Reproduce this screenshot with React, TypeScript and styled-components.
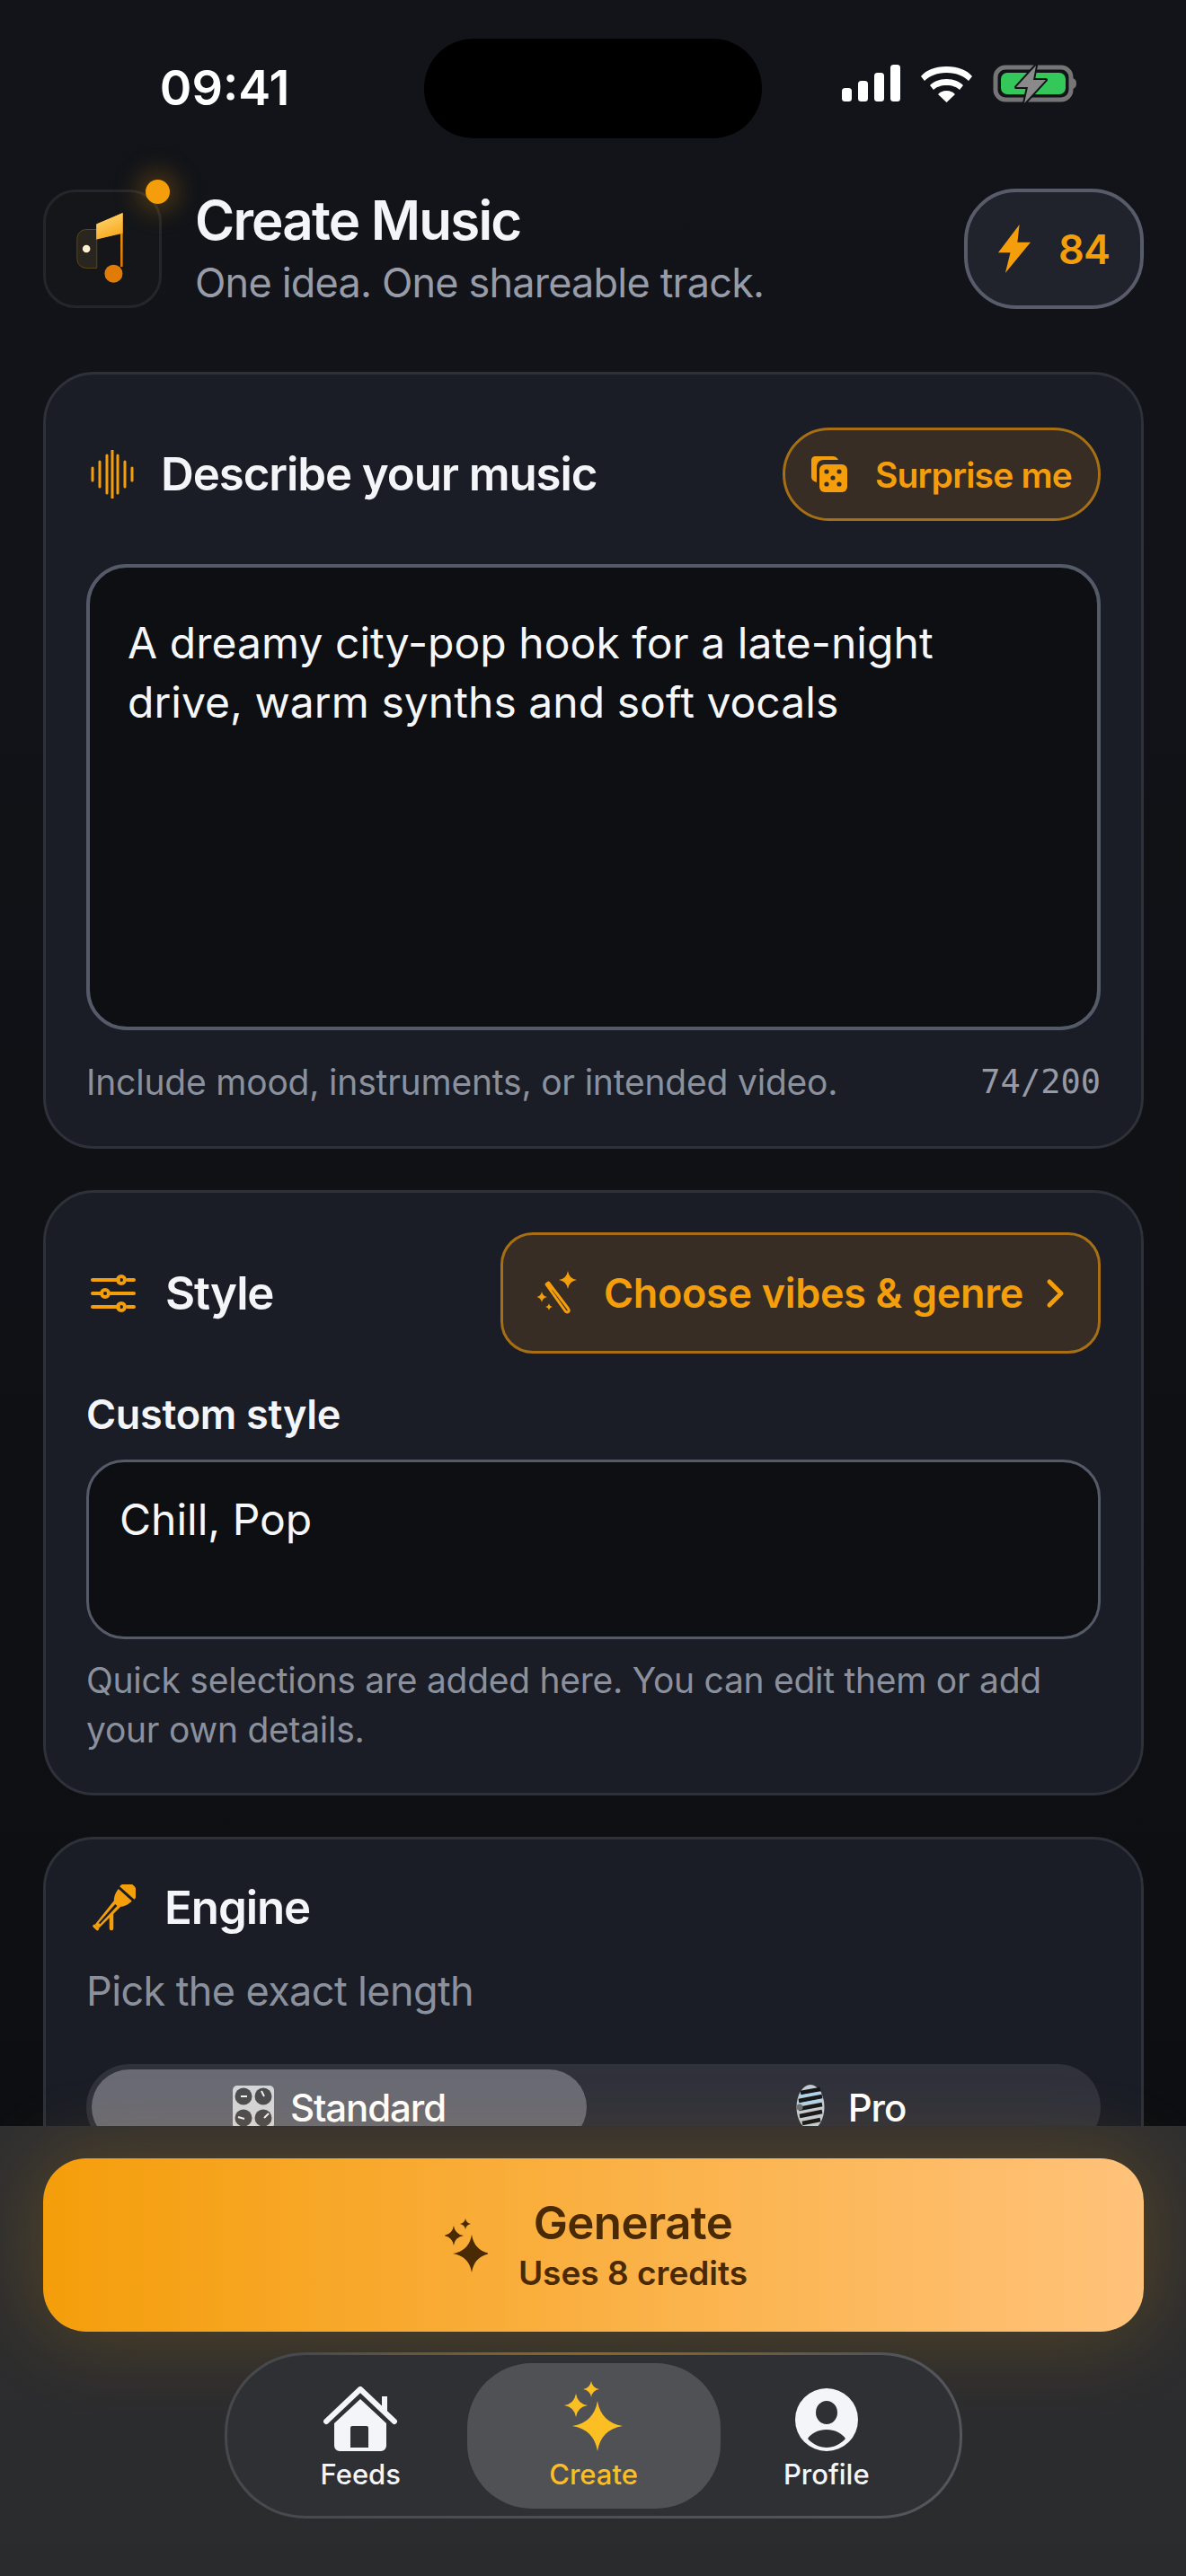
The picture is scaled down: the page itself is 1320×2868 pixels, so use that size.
import React from "react";
import styled, { createGlobalStyle } from "styled-components";

const ORANGE = "#f59e0b";

const star = (cx: number, cy: number, r: number, k = 0.14) => {
  const c = r * k;
  return `M${cx} ${cy - r}Q${cx + c} ${cy - c} ${cx + r} ${cy}Q${cx + c} ${cy + c} ${cx} ${cy + r}Q${cx - c} ${cy + c} ${cx - r} ${cy}Q${cx - c} ${cy - c} ${cx} ${cy - r}Z`;
};

const App = () => {
  return (
    <Page>
      <GlobalStyle />
      <StatusBar>
        <Time>09:41</Time>
        <Island />
        <StatusIcons />
      </StatusBar>

      <Header>
        <LogoBox>
          <LogoIcon />
          <LogoDot />
        </LogoBox>
        <HeaderText>
          <AppTitle>Create Music</AppTitle>
          <AppSubtitle>One idea. One shareable track.</AppSubtitle>
        </HeaderText>
        <CreditPill>
          <svg width="36" height="54" viewBox="2 0 32 52" preserveAspectRatio="none">
            <path d="M23 0 2 30h12L9 52l25-33H21z" fill={ORANGE} />
          </svg>
          <span>84</span>
        </CreditPill>
      </Header>

      <Cards>
        <Card $top={59} $bottom={43}>
          <CardHead>
            <TitleGroup $gap={30}>
              <WaveIcon />
              <CardTitle>Describe your music</CardTitle>
            </TitleGroup>
            <SurpriseBtn>
              <DiceIcon />
              Surprise me
            </SurpriseBtn>
          </CardHead>
          <PromptBox>
            A dreamy city-pop hook for a late-night drive, warm synths and soft vocals
          </PromptBox>
          <PromptFoot>
            <Hint>Include mood, instruments, or intended video.</Hint>
            <Counter>74/200</Counter>
          </PromptFoot>
        </Card>

        <Card $top={44} $bottom={41}>
          <CardHead>
            <TitleGroup $gap={33}>
              <SlidersIcon />
              <CardTitle>Style</CardTitle>
            </TitleGroup>
            <VibesBtn>
              <WandIcon />
              <VibesLabel>Choose vibes &amp; genre</VibesLabel>
              <svg width="22" height="34" viewBox="0 0 22 34" fill="none">
                <path d="m4 4 13 13L4 30" stroke={ORANGE} strokeWidth="5" strokeLinecap="round" strokeLinejoin="round" />
              </svg>
            </VibesBtn>
          </CardHead>
          <FieldLabel>Custom style</FieldLabel>
          <StyleInput>Chill, Pop</StyleInput>
          <StyleHint>Quick selections are added here. You can edit them or add your own details.</StyleHint>
        </Card>

        <Card $top={46} $bottom={48}>
          <TitleGroup $gap={32}>
            <MicIcon />
            <CardTitle>Engine</CardTitle>
          </TitleGroup>
          <EngineSub>Pick the exact length</EngineSub>
          <Segment>
            <SegmentItem $active>
              <KnobsIcon />
              Standard
            </SegmentItem>
            <SegmentItem $shift={22}>
              <StudioMicIcon />
              Pro
            </SegmentItem>
          </Segment>
        </Card>
      </Cards>

      <Dock>
        <GenerateBtn>
          <svg width="48" height="60" viewBox="0 0 48 60" fill="#4a2a04">
            <path d={star(30, 39, 21)} />
            <path d={star(10, 19, 11)} />
            <path d={star(23, 6, 6)} />
          </svg>
          <GenerateText>
            <GenerateTitle>Generate</GenerateTitle>
            <GenerateSub>Uses 8 credits</GenerateSub>
          </GenerateText>
        </GenerateBtn>
        <Nav>
          <NavItem>
            <HomeIcon />
            <NavLabel>Feeds</NavLabel>
          </NavItem>
          <NavItem $active>
            <svg width="66" height="78" viewBox="0 0 66 78" fill="#fbbf24">
              <path d={star(37, 50, 28)} />
              <path d={star(13, 27, 13)} />
              <path d={star(30, 9, 9)} />
            </svg>
            <NavLabel $active>Create</NavLabel>
          </NavItem>
          <NavItem>
            <ProfileIcon />
            <NavLabel>Profile</NavLabel>
          </NavItem>
        </Nav>
      </Dock>
    </Page>
  );
};

export default App;

const StatusIcons = () => (
  <StatusSvg width="266" height="44" viewBox="0 0 266 44">
    <g fill="#fff">
      <rect x="0" y="26" width="11" height="15" rx="3.5" />
      <rect x="18" y="18" width="11" height="23" rx="3.5" />
      <rect x="36" y="9" width="11" height="32" rx="3.5" />
      <rect x="54" y="0" width="11" height="41" rx="3.5" />
      <path d="M88 13C94 6 103 2 116.500 2S139 6 145 13l-4 5c-5-5-13-9-24.500-9S97 13 92 18z" />
      <path d="M98 23c4-4 10-7 18.500-7S131 19 135 23l-4 5c-3-3-8-5-14.500-5S105 25 102 28z" />
      <path d="M107 33c2-2 5-4 9.500-4S124 31 126 33l-9.500 9z" />
    </g>
    <rect x="171" y="3" width="84" height="36" rx="11" fill="none" stroke="#757575" strokeWidth="5" />
    <rect x="177" y="9" width="72" height="24" rx="7" fill="#34c759" />
    <path d="M257 15c3 1 4 3 4 6s-1 5-4 6z" fill="#757575" />
    <path d="M216 1 194 25h13l-4 18 24-26h-14z" fill="#8a8a8a" stroke="#111318" strokeWidth="4" strokeLinejoin="round" paintOrder="stroke" />
  </StatusSvg>
);

const LogoIcon = () => (
  <svg width="132" height="132" viewBox="0 0 132 132">
    <defs>
      <linearGradient id="flag" x1="0.2" y1="0" x2="0.6" y2="1">
        <stop offset="0" stopColor="#ffd778" />
        <stop offset="1" stopColor="#f8a81a" />
      </linearGradient>
      <linearGradient id="stem" x1="0" y1="0" x2="0" y2="1">
        <stop offset="0" stopColor="#f59e0b" />
        <stop offset="1" stopColor="#dd7706" />
      </linearGradient>
    </defs>
    <path d="M59.500 43.500H47a10.500 10.500 0 0 0-10.500 10.500v24A10.500 10.500 0 0 0 47 88.500h12.500z" fill="#29251f" stroke="#634717" strokeWidth="1" />
    <circle cx="47.300" cy="66" r="4.500" fill="#fff3cf" />
    <path d="M59 37.300 89.700 24v63h-2.700V48L59 55z" fill="url(#stem)" />
    <path d="M59 37.300 89.700 24v24L59 55z" fill="url(#flag)" />
    <circle cx="79" cy="95" r="10.500" fill="#e07c06" />
  </svg>
);

const WaveIcon = () => (
  <svg width="48" height="54" viewBox="0 0 48 54" stroke={ORANGE} strokeWidth="3" strokeLinecap="round">
    <path d="M2 20v14M10 13v28M18 6v42M24 0v54M30 6v42M38 13v28M46 20v14" />
  </svg>
);

const DiceIcon = () => (
  <svg width="40" height="40" viewBox="0 0 40 40">
    <path d="M4 0h20c3 0 5 2 6 4H14C8 4 6 8 6 13v16c-4-1-6-3-6-6V4c0-2 2-4 4-4z" fill={ORANGE} />
    <rect x="9" y="9" width="31" height="31" rx="6" fill={ORANGE} />
    <g fill="#372d24">
      <circle cx="17" cy="17" r="2.600" />
      <circle cx="31" cy="17" r="2.600" />
      <circle cx="24" cy="24" r="2.600" />
      <circle cx="17" cy="31" r="2.600" />
      <circle cx="31" cy="31" r="2.600" />
    </g>
  </svg>
);

const SlidersIcon = () => (
  <svg width="50" height="42" viewBox="0 0 50 42" fill="none" stroke={ORANGE} strokeWidth="4" strokeLinecap="round">
    <path d="M2 6h29M41 6h7M2 21h10M22 21h26M2 36h29M41 36h7" />
    <circle cx="34" cy="6" r="4" />
    <circle cx="16" cy="21" r="4" />
    <circle cx="34" cy="36" r="4" />
  </svg>
);

const WandIcon = () => (
  <svg width="46" height="50" viewBox="0 0 46 50" fill={ORANGE}>
    <path d="m10 15 2.500-2 22 29c1 1.500 1 2.500 0 3.500s-2.500.5-3.500-1z" fill="none" stroke={ORANGE} strokeWidth="3" strokeLinejoin="round" />
    <path d="m9 15 3-2.500 6 7.500-3 2.500z" />
    <path d={star(34, 10, 10)} />
    <path d={star(5, 29, 6)} />
    <path d={star(13, 40, 4)} />
  </svg>
);

const MicIcon = () => (
  <svg width="50" height="52" viewBox="0 0 50 52">
    <path d="M23 30v19" stroke={ORANGE} strokeWidth="4.500" strokeLinecap="round" />
    <g transform="rotate(42 39 11)" fill={ORANGE}>
      <path d="M28 9A11 11 0 0 1 50 9z" />
      <path d="M29 12H49C49 18 46 23 44 25L42 59H36L34 25C32 23 29 18 29 12Z" />
      <rect x="35" y="59" width="8" height="3.500" rx="1.500" />
    </g>
    <g transform="rotate(42 39 11)" fill="#1a1d26">
      <path d="M37.500 27H40.500L40 55H38Z" />
    </g>
  </svg>
);

const KnobsIcon = () => (
  <svg width="46" height="48" viewBox="0 0 46 48">
    <rect width="46" height="48" rx="5" fill="#d4d6da" />
    {[
      [12, 12, 9, 12, 16, 12],
      [34, 12, 32, 6, 35, 12],
      [12, 36, 6, 35, 13, 37],
      [34, 36, 40, 31, 35, 36],
    ].map(([cx, cy, x1, y1, x2, y2], i) => (
      <g key={i}>
        <circle cx={cx} cy={cy} r="9.500" fill="#4b4c50" />
        <line x1={x1} y1={y1} x2={x2} y2={y2} stroke="#f2f2f2" strokeWidth="2" />
      </g>
    ))}
  </svg>
);

const StudioMicIcon = () => (
  <svg width="40" height="50" viewBox="0 0 40 50">
    <ellipse cx="16" cy="25" rx="15.500" ry="25" fill="#c3ccd4" />
    <path d="M5 9 27 5M3 18l26-5M3 27l26-5M4 35l25-5M7 43l20-4" stroke="#15161a" strokeWidth="4.500" />
    <path d="M4 13l24-4M3 22l26-5" stroke="#a8d4f2" strokeWidth="2.500" />
    <circle cx="4" cy="25" r="3.500" fill="#6d7074" />
  </svg>
);

const HomeIcon = () => (
  <svg width="82" height="72" viewBox="0 0 82 72">
    <path d="M3 39 41 3l38 36" fill="none" stroke="#f4f5f9" strokeWidth="6" strokeLinecap="round" strokeLinejoin="round" />
    <path d="M65 24V11h6v19z" fill="#f4f5f9" />
    <path fillRule="evenodd" d="M41 14 70 41v25a6 6 0 0 1-6 6H18a6 6 0 0 1-6-6V41zM32 44a2 2 0 0 0-2 2v22h20V46a2 2 0 0 0-2-2z" fill="#f4f5f9" />
  </svg>
);

const ProfileIcon = () => (
  <svg width="70" height="70" viewBox="0 0 70 70">
    <path
      fillRule="evenodd"
      d="M35 0a35 35 0 1 0 0 70 35 35 0 0 0 0-70zM35 14a12 13 0 1 1 0 26 12 13 0 0 1 0-26zM14 56c4-6 12-10 21-10s17 4 21 10c-5 6-13 10-21 10s-16-4-21-10z"
      fill="#f4f5f9"
    />
  </svg>
);

const GlobalStyle = createGlobalStyle`
  html, body {
    margin: 0;
    padding: 0;
    background: #111318;
  }
  * {
    box-sizing: border-box;
  }
`;

const Page = styled.div`
  position: relative;
  width: 1320px;
  height: 2868px;
  overflow: hidden;
  display: flex;
  flex-direction: column;
  font-family: Inter, "Noto Sans", sans-serif;
  color: #f4f5f9;
  background: linear-gradient(180deg, #121419 0%, #111318 20%, #0b0d10 100%);
`;

const StatusBar = styled.div`
  display: grid;
  grid-template-columns: 472px 376px 472px;
  align-items: center;
  height: 111px;
  margin-top: 41px;
`;

const StatusSvg = styled.svg`
  margin-left: 89px;
  margin-top: -8px;
`;

const Time = styled.div`
  padding-left: 28px;
  text-align: center;
  font-size: 54px;
  font-weight: 600;
  color: #fff;
  line-height: 114px;
`;

const Island = styled.div`
  height: 111px;
  border-radius: 55px;
  background: #000;
`;

const Header = styled.div`
  display: flex;
  align-items: center;
  gap: 37px;
  padding: 0 47px 0 48px;
  margin-top: 57px;
`;

const LogoBox = styled.div`
  position: relative;
  width: 132px;
  height: 132px;
  flex: 0 0 auto;
  border-radius: 36px;
  border: 3px solid #24262b;
  display: flex;
  align-items: center;
  justify-content: center;
  background: #141619;
`;

const LogoDot = styled.div`
  position: absolute;
  right: -12px;
  top: -14px;
  width: 27px;
  height: 27px;
  border-radius: 50%;
  background: ${ORANGE};
  box-shadow: 0 0 30px 6px rgba(245, 158, 11, 0.35);
`;

const HeaderText = styled.div`
  flex: 1;
  display: flex;
  flex-direction: column;
`;

const AppTitle = styled.div`
  font-size: 60px;
  font-weight: 600;
  line-height: 72px;
  letter-spacing: -1.8px;
`;

const AppSubtitle = styled.div`
  margin-top: 4px;
  font-size: 45px;
  line-height: 60px;
  letter-spacing: -0.8px;
  color: #979ca8;
`;

const CreditPill = styled.div`
  width: 200px;
  height: 134px;
  border-radius: 58px;
  border: 4px solid #585c6a;
  background: #20222c;
  display: flex;
  align-items: center;
  justify-content: center;
  gap: 31px;
  font-size: 45px;
  font-weight: 600;
  letter-spacing: -1px;
  color: ${ORANGE};
`;

const Cards = styled.div`
  display: flex;
  flex-direction: column;
  gap: 46px;
  padding: 0 47px 0 48px;
  margin-top: 69px;
`;

const Card = styled.div<{ $top: number; $bottom: number }>`
  border: 3px solid #2e3139;
  border-radius: 57px;
  background: #1a1d26;
  padding: ${(p) => p.$top}px 45px ${(p) => p.$bottom}px;
  flex: 0 0 auto;
`;

const CardHead = styled.div`
  display: flex;
  align-items: center;
  justify-content: space-between;
`;

const TitleGroup = styled.div<{ $gap: number }>`
  display: flex;
  align-items: center;
  gap: ${(p) => p.$gap}px;
  padding-left: 5px;
`;

const CardTitle = styled.div`
  font-size: 51px;
  font-weight: 600;
  line-height: 60px;
  letter-spacing: -1.1px;
`;

const SurpriseBtn = styled.div`
  width: 354px;
  height: 104px;
  border-radius: 52px;
  border: 3px solid #a66f14;
  background: #372d24;
  display: flex;
  align-items: center;
  justify-content: center;
  gap: 31px;
  font-size: 39px;
  font-weight: 600;
  letter-spacing: -0.8px;
  color: ${ORANGE};
`;

const PromptBox = styled.div`
  margin-top: 48px;
  height: 519px;
  border: 4px solid #555a68;
  border-radius: 45px;
  background: #0d0f13;
  padding: 51px 120px 0 42px;
  font-size: 48px;
  line-height: 66px;
  letter-spacing: 0.05px;
  color: #f6f7fa;
`;

const PromptFoot = styled.div`
  display: flex;
  align-items: center;
  justify-content: space-between;
  margin-top: 30px;
  margin-bottom: 2px;
  height: 54px;
`;

const Hint = styled.div`
  font-size: 39px;
  letter-spacing: -0.2px;
  color: #8b909d;
`;

const Counter = styled.div`
  font-family: "DejaVu Sans Mono", "Liberation Mono", monospace;
  font-size: 37px;
  color: #969aa6;
`;

const VibesBtn = styled.div`
  width: 668px;
  height: 135px;
  border-radius: 36px;
  border: 3px solid #a66f14;
  background: #372d24;
  display: flex;
  align-items: center;
  padding: 0 36px 0 38px;
  font-size: 45px;
  font-weight: 600;
  letter-spacing: -0.35px;
  color: ${ORANGE};
`;

const VibesLabel = styled.span`
  flex: 1;
  margin-left: 28px;
  white-space: nowrap;
`;

const FieldLabel = styled.div`
  margin-top: 38px;
  font-size: 45px;
  font-weight: 600;
  line-height: 60px;
  letter-spacing: -0.3px;
`;

const StyleInput = styled.div`
  margin-top: 20px;
  height: 200px;
  border: 3px solid #555a68;
  border-radius: 42px;
  background: #0d0f13;
  padding: 34px 34px 0;
  font-size: 48px;
  line-height: 60px;
  color: #f6f7fa;
`;

const StyleHint = styled.div`
  margin-top: 18px;
  margin-bottom: 2px;
  font-size: 39px;
  line-height: 55px;
  letter-spacing: -0.27px;
  color: #8b909d;
`;

const EngineSub = styled.div`
  margin-top: 33px;
  font-size: 45px;
  line-height: 60px;
  letter-spacing: -0.6px;
  color: #8b909d;
`;

const Segment = styled.div`
  margin-top: 51px;
  height: 96px;
  padding: 6px;
  border-radius: 48px;
  background: #2f313b;
  display: grid;
  grid-template-columns: 551px 1fr;
`;

const SegmentItem = styled.div<{ $active?: boolean; $shift?: number }>`
  border-radius: 42px;
  background: ${(p) => (p.$active ? "#696a74" : "transparent")};
  display: flex;
  align-items: center;
  justify-content: center;
  gap: 18px;
  padding-left: ${(p) => p.$shift ?? 0}px;
  font-size: 42px;
  font-weight: 500;
  letter-spacing: -1.1px;
  color: #fff;
`;

const Dock = styled.div`
  position: absolute;
  left: 0;
  right: 0;
  bottom: 0;
  height: 501px;
  padding: 36px 47px 0 48px;
  background: linear-gradient(180deg, #2f2f30 0%, #2a2b2d 100%);
  display: flex;
  flex-direction: column;
  align-items: center;
`;

const GenerateBtn = styled.div`
  width: 100%;
  height: 193px;
  flex: 0 0 auto;
  border-radius: 48px;
  padding-left: 6px;
  background: linear-gradient(90deg, #f59e0b 0%, #ffc27a 100%);
  box-shadow: 0 0 90px 6px rgba(245, 158, 11, 0.2);
  display: flex;
  align-items: center;
  justify-content: center;
  gap: 34px;
  color: #4a2a04;
`;

const GenerateText = styled.div`
  display: flex;
  flex-direction: column;
  align-items: center;
  padding-top: 3px;
`;

const GenerateTitle = styled.div`
  font-size: 51px;
  font-weight: 600;
  line-height: 60px;
  letter-spacing: -0.6px;
`;

const GenerateSub = styled.div`
  font-size: 37px;
  font-weight: 600;
  line-height: 52px;
`;

const Nav = styled.div`
  position: relative;
  margin-top: 23px;
  width: 821px;
  height: 185px;
  flex: 0 0 auto;
  border-radius: 90px;
  border: 3px solid transparent;
  background:
    linear-gradient(#2f3034, #2f3034) padding-box,
    radial-gradient(ellipse 40% 8px at 50% 0, #9a6c1c, transparent) border-box,
    linear-gradient(100deg, #47484c, #55565c) border-box;
  display: grid;
  grid-template-columns: 1fr 282px 1fr;
  align-items: center;
  padding: 0 30px;
`;

const NavItem = styled.div<{ $active?: boolean }>`
  height: 162px;
  border-radius: 72px;
  background: ${(p) => (p.$active ? "#505155" : "transparent")};
  display: flex;
  flex-direction: column;
  align-items: center;
  justify-content: flex-end;
  padding-bottom: 18px;
`;

const NavLabel = styled.div<{ $active?: boolean }>`
  margin-top: 6px;
  font-size: 31px;
  font-weight: 500;
  line-height: 40px;
  color: ${(p) => (p.$active ? "#fbbf24" : "#f4f5f9")};
`;
